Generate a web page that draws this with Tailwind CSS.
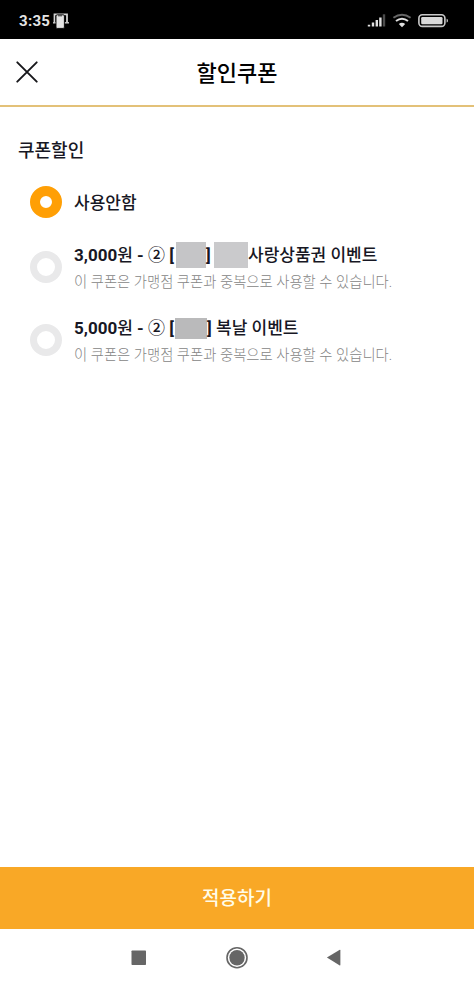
<!DOCTYPE html>
<html lang="ko">
<head>
<meta charset="utf-8">
<title>할인쿠폰</title>
<script src="https://cdn.jsdelivr.net/npm/@tailwindcss/browser@4"></script>
</head>
<body class="bg-white">
<div class="flex h-[986px] w-[474px] flex-col overflow-hidden bg-white font-['Roboto','Noto_Sans_CJK_KR',sans-serif] text-[#171724]">
  <div class="flex h-[39px] shrink-0 items-center bg-black pt-[3px] pr-[25px] pl-[19px] text-[#e4e4e4]">
    <span class="w-[34px] text-[15px] leading-5 font-bold tracking-[0.3px] whitespace-nowrap">3:35</span>
    <svg class="h-4 w-4" viewBox="0 0 16 16" fill="none"><path d="M1.5 9.5V1.3H14v8.2" stroke="#d2d2d2" stroke-width="1.8"/><path d="M0 9.8h16" stroke="#d2d2d2" stroke-width="1.4"/><rect x="3" y="1.8" width="8.4" height="13.6" rx="1.2" fill="#e4e4e4" stroke="#000" stroke-width=".9"/><path d="M5 2.8h4" stroke="#333"/></svg>
    <svg class="ml-auto h-4 w-[82px]" viewBox="0 0 82 16" fill="none">
      <path d="M2 11.8v1.7M6 9.6v3.9M9.8 7v6.5M13.4 4.5v9" stroke="#e1e1e1" stroke-width="2.4"/><path d="M17 1.3v12.2" stroke="#4c4c4c" stroke-width="2.4"/>
      <path d="M26.4 4.7Q35 -1.2 43.6 4.7" stroke="#666" stroke-width="2"/><path d="M29 8Q35 3.4 41 8" stroke="#e1e1e1" stroke-width="2"/><path d="M31.8 10.9Q35 8.7 38.2 10.9L35 14.2Z" fill="#e1e1e1"/>
      <rect x="51.9" y="1.8" width="26" height="11.6" rx="3.4" stroke="#c9c9c9" stroke-width="1.6"/><rect x="54.2" y="4" width="21.3" height="7.3" rx="1.2" fill="#d9d9d9"/><path d="M79.6 5.7c1.8.2 1.8 3.6 0 3.8z" fill="#c9c9c9"/>
    </svg>
  </div>
  <header class="grid h-[68px] shrink-0 grid-cols-[54px_1fr_54px] items-center border-b-2 border-[#e3c178]">
    <svg class="ml-4 h-[22px] w-[22px]" viewBox="0 0 22 22" fill="none" stroke="#17171b" stroke-width="1.9" stroke-linecap="round"><path d="M1.3 1.3 20.7 20.7M20.7 1.3 1.3 20.7"/></svg>
    <h1 class="pt-[3px] text-center text-[22px] leading-8 font-medium text-black">할인쿠폰</h1>
  </header>
  <main class="flex grow flex-col">
    <h2 class="mt-[30px] ml-[18px] text-[18px] leading-[27px] font-medium">쿠폰할인</h2>
    <div class="mt-[22px] ml-[30px] flex items-center gap-3">
      <span class="h-8 w-8 rounded-full border-[10px] border-[#ff9f05]"></span>
      <span class="pt-0.5 text-[17px] leading-6 font-medium">사용안함</span>
    </div>
    <div class="mt-6 ml-[30px] flex h-[50px] items-center gap-3">
      <span class="h-8 w-8 shrink-0 rounded-full border-[7px] border-[#e9e9ea]"></span>
      <div>
        <div class="flex h-[26px] items-center text-[17px] leading-6 font-medium whitespace-nowrap">
          <span class="w-[102px]"><b>3,000</b>원 <b>-</b> ② <b>[</b></span><span class="h-[26px] w-[30px] bg-[#c5c5c7]"></span><b class="w-2">]</b><span class="h-[26px] w-[34px] bg-[#cacacc]"></span><span>사랑상품권 이벤트</span>
        </div>
        <p class="mt-1 -mb-px text-[14.35px] leading-[21px] font-light whitespace-nowrap text-[#858585]">이 쿠폰은 가맹점 쿠폰과 중복으로 사용할 수 있습니다.</p>
      </div>
    </div>
    <div class="mt-[23px] ml-[30px] flex h-[50px] items-center gap-3">
      <span class="h-8 w-8 shrink-0 rounded-full border-[7px] border-[#e9e9ea]"></span>
      <div>
        <div class="flex h-[26px] items-center text-[17px] leading-6 font-medium whitespace-nowrap">
          <span class="w-[101px]"><b>5,000</b>원 <b>-</b> ② <b>[</b></span><span class="h-[21px] w-8 bg-[#bababb]"></span><b class="w-[9px]">]</b><span>복날 이벤트</span>
        </div>
        <p class="mt-1 -mb-px text-[14.35px] leading-[21px] font-light whitespace-nowrap text-[#858585]">이 쿠폰은 가맹점 쿠폰과 중복으로 사용할 수 있습니다.</p>
      </div>
    </div>
  </main>
  <button class="h-[62px] shrink-0 bg-[#f9a826] pt-[3px] text-[19px] font-medium text-[#fffce8]">적용하기</button>
  <nav class="flex h-[57px] shrink-0 justify-center text-[#666]">
    <svg class="h-[57px] w-[220px]" viewBox="0 0 220 57" fill="currentColor"><rect x="4.5" y="21.5" width="14.5" height="14.5" rx=".7"/><circle cx="110" cy="28.7" r="7.7"/><circle cx="110" cy="28.7" r="10" fill="none" stroke="currentColor" stroke-width="1.6"/><path d="M199.9 28.6 212.4 21q1-.5 1 .5v14.3q0 1-1 .5z"/></svg>
  </nav>
</div>
</body>
</html>
